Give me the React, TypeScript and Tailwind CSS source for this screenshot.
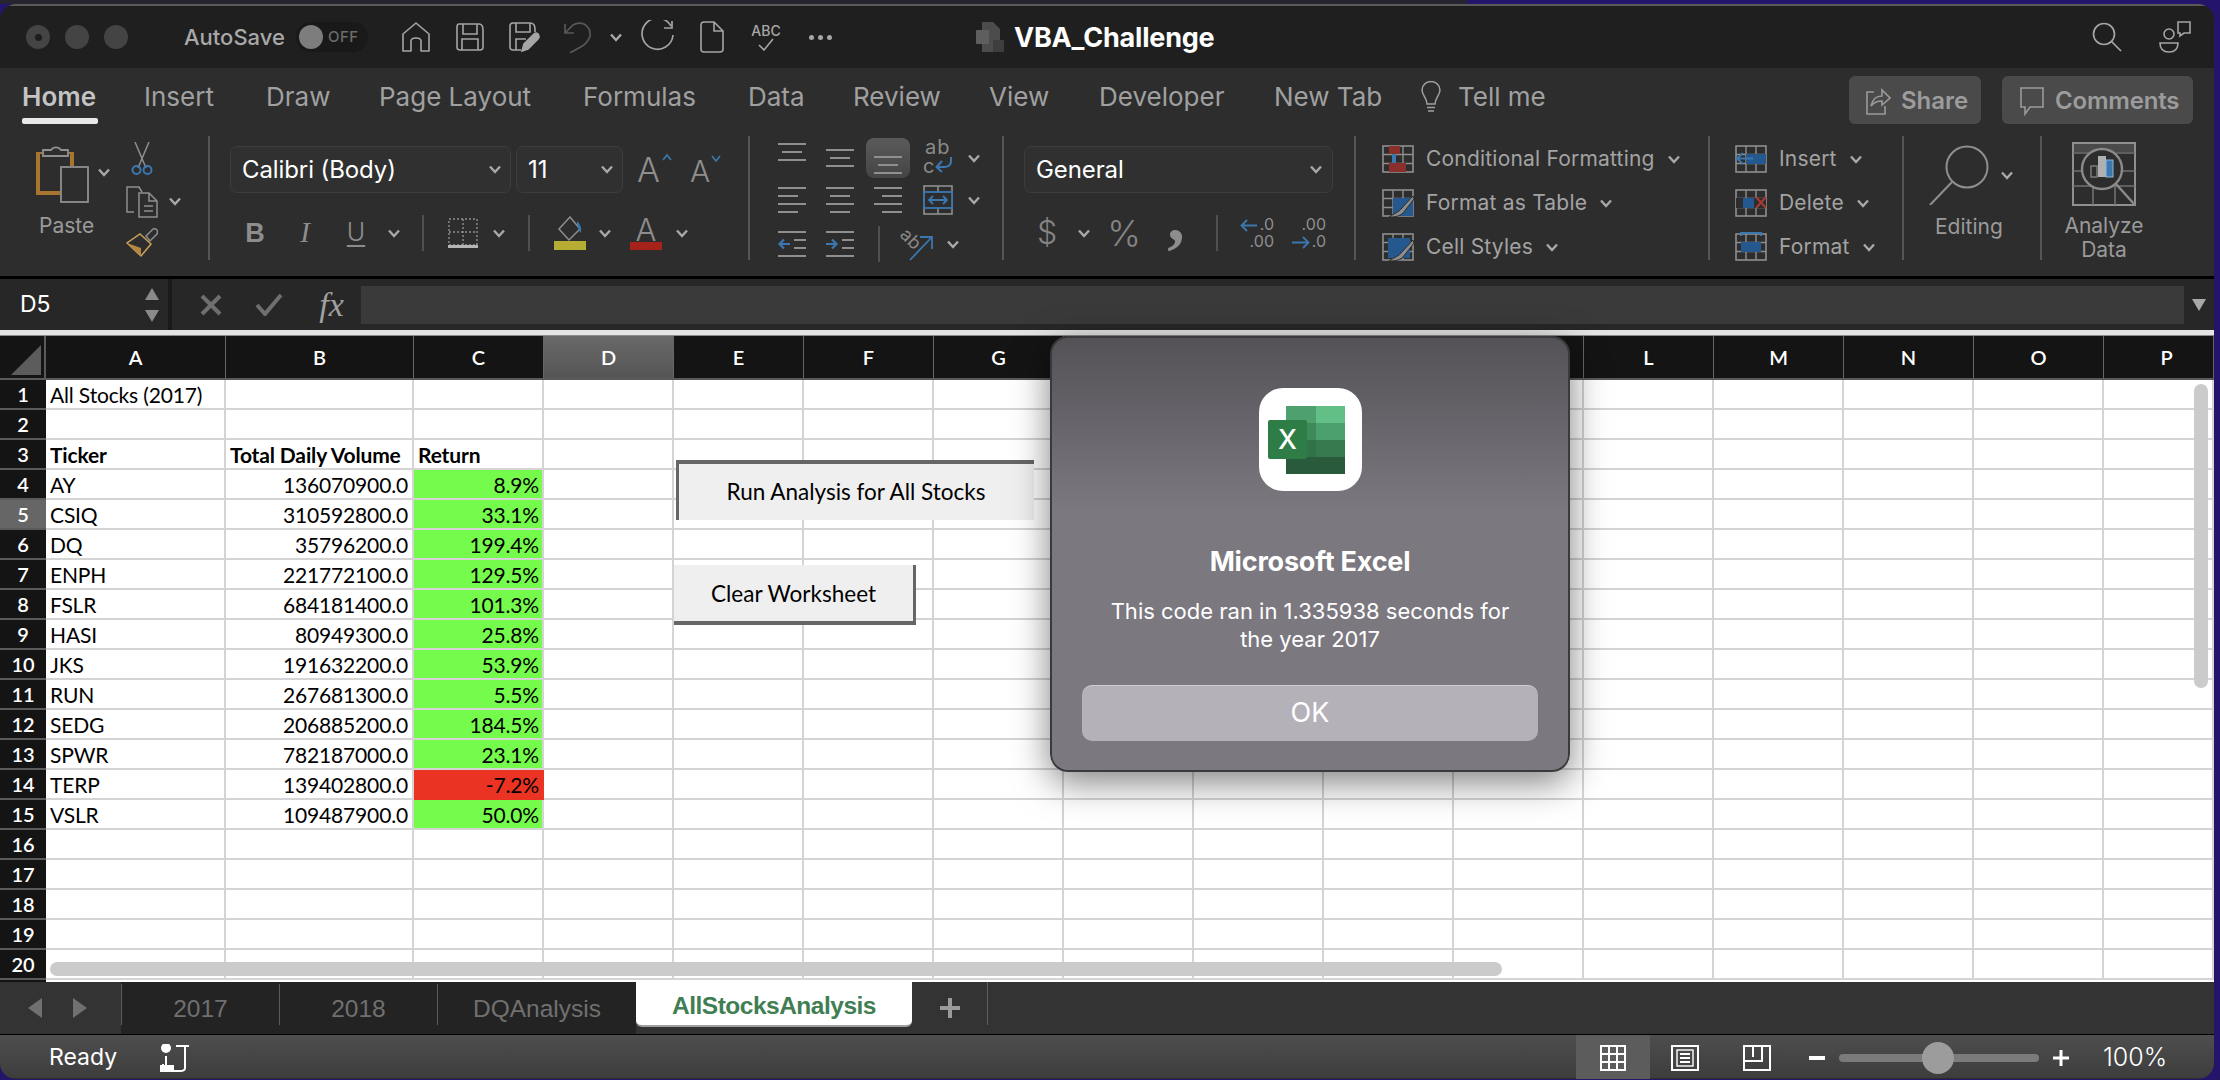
import React from 'react';

const UI = "font-['Inter','Liberation_Sans',sans-serif]";
const CELL = "font-['Lato','Open_Sans',sans-serif]";
const ROW_GRID = 'grid grid-cols-[46px_180px_188px_130px_130px_130px_130px_130px_130px_130px_130px_130px_130px_130px_130px_130px_110px]';
const COLS = ['A', 'B', 'C', 'D', 'E', 'F', 'G', 'H', 'I', 'J', 'K', 'L', 'M', 'N', 'O', 'P'];

const STOCKS: [string, string, string, boolean?][] = [
  ['AY', '136070900.0', '8.9%'],
  ['CSIQ', '310592800.0', '33.1%'],
  ['DQ', '35796200.0', '199.4%'],
  ['ENPH', '221772100.0', '129.5%'],
  ['FSLR', '684181400.0', '101.3%'],
  ['HASI', '80949300.0', '25.8%'],
  ['JKS', '191632200.0', '53.9%'],
  ['RUN', '267681300.0', '5.5%'],
  ['SEDG', '206885200.0', '184.5%'],
  ['SPWR', '782187000.0', '23.1%'],
  ['TERP', '139402800.0', '-7.2%', true],
  ['VSLR', '109487900.0', '50.0%'],
];

const GRAY = '#8f8f8f';
const BLUE = '#3b78b0';

function Chevron({ color = '#a8a8a8' }: { color?: string }) {
  return (
    <svg width="12" height="9" viewBox="0 0 12 9" fill="none">
      <path d="M1 1.5 L6 7 L11 1.5" stroke={color} strokeWidth="2.4" />
    </svg>
  );
}

function Slot({ w, children }: { w: string; children?: React.ReactNode }) {
  return <div className={`${w} flex items-center justify-center shrink-0`}>{children}</div>;
}

function Sep() {
  return <div className="w-[2px] h-[124px] mt-0 bg-[#555555] shrink-0" />;
}

function MiniSep({ h = 'h-[36px]' }: { h?: string }) {
  return <div className={`w-[2px] ${h} bg-[#505050]`} />;
}

function Lines({ rows, h = 40 }: { rows: [number, number, number][]; h?: number }) {
  return (
    <svg width="28" height={h} viewBox={`0 0 28 ${h}`}>
      {rows.map(([x, w, y], i) => (
        <rect key={i} x={x} y={y} width={w} height="2" fill={GRAY} />
      ))}
    </svg>
  );
}

function Indent({ dir }: { dir: 'l' | 'r' }) {
  return (
    <svg width="28" height="28" viewBox="0 0 28 28" fill="none">
      <rect x="0" y="1" width="28" height="2" fill={GRAY} />
      <rect x="16" y="9" width="12" height="2" fill={GRAY} />
      <rect x="16" y="17" width="12" height="2" fill={GRAY} />
      <rect x="0" y="25" width="28" height="2" fill={GRAY} />
      {dir === 'l' ? (
        <path d="M12 14 H2 M6 9.5 L1.5 14 L6 18.5" stroke={BLUE} strokeWidth="2.2" />
      ) : (
        <path d="M0 14 H10 M6 9.5 L10.5 14 L6 18.5" stroke={BLUE} strokeWidth="2.2" />
      )}
    </svg>
  );
}

function TableIcon({ children }: { children?: React.ReactNode }) {
  return (
    <svg width="32" height="30" viewBox="0 0 32 30" fill="none">
      <rect x="1" y="2" width="30" height="26" stroke={GRAY} strokeWidth="1.6" />
      <path d="M11 2 V28 M21 2 V28 M1 10.5 H31 M1 19.5 H31" stroke={GRAY} strokeWidth="1.4" />
      {children}
    </svg>
  );
}

const Brush = () => (
  <path d="M31 8 L19 21 C17 24 13 25 7 29 C11 29 17 29 21 25 L32 11 Z" fill="#8d8d8d" stroke="#2d2d2d" strokeWidth="1" />
);

function StyleRow({ icon, label }: { icon: React.ReactNode; label: string }) {
  return (
    <div className="h-[44px] flex items-center">
      <div className="w-[32px] h-[30px] shrink-0">{icon}</div>
      <span className="ml-[12px] text-[21px] text-[#a3a3a3] tracking-[0.2px] whitespace-nowrap">{label}</span>
      <div className="ml-[13px]">
        <Chevron />
      </div>
    </div>
  );
}

function TitleBar() {
  return (
    <div className="h-[64px] bg-[#1f1f1f] border-t-2 border-[#5a5a5a] flex items-center relative shrink-0">
      <div className="ml-[26px] flex gap-[15px]">
        <div className="w-[24px] h-[24px] rounded-full bg-[#444444] flex items-center justify-center">
          <div className="w-[7px] h-[7px] rounded-full bg-[#1e1e1e]" />
        </div>
        <div className="w-[24px] h-[24px] rounded-full bg-[#444444]" />
        <div className="w-[24px] h-[24px] rounded-full bg-[#444444]" />
      </div>
      <span className="ml-[56px] w-[112px] text-[22px] text-[#a8a8a8] font-medium">AutoSave</span>
      <div className="w-[72px] h-[30px] rounded-full bg-[#191919] flex items-center pl-[3px]">
        <div className="w-[24px] h-[24px] rounded-full bg-[#7d7d7d]" />
        <span className="ml-[5px] text-[15px] font-medium tracking-[0.5px] text-[#6c6c6c]">OFF</span>
      </div>
      <div className="ml-[21px] w-[54px] flex justify-center">
        <svg width="30" height="32" viewBox="0 0 30 32" fill="none" stroke="#a5a5a5" strokeWidth="1.6" strokeLinejoin="round">
          <path d="M2 30 V13 L15 2 L28 13 V30 H20 V20 Q20 17 15 17 Q10 17 10 20 V30 Z" />
        </svg>
      </div>
      <div className="w-[54px] flex justify-center">
        <svg width="30" height="30" viewBox="0 0 30 30" fill="none" stroke="#a5a5a5" strokeWidth="1.6">
          <path d="M4 2 H24 Q28 2 28 8 V25 Q28 28 25 28 H5 Q2 28 2 25 V5 Q2 2 4 2 Z" />
          <path d="M8 2 V12 H22 V2 M7 28 V17 H23 V28" />
        </svg>
      </div>
      <div className="w-[54px] flex justify-center">
        <svg width="32" height="32" viewBox="0 0 32 32" fill="none" stroke="#a5a5a5" strokeWidth="1.6">
          <path d="M13 29 H5 Q2 29 2 26 V5 Q2 2 5 2 H22 Q27 2 27 8 V11" />
          <path d="M8 2 V11 H22 V2 M8 29 V18 H18" />
          <path d="M14 30 L16 23 L26 13 Q28 11 30 13 Q32 16 30 18 L20 28 Z" fill="#a5a5a5" />
        </svg>
      </div>
      <div className="w-[54px] flex justify-center">
        <svg width="28" height="32" viewBox="0 0 28 32" fill="none" stroke="#585858" strokeWidth="1.7">
          <path d="M1 3 V12 H10 M1 12 L9 4 Q14 1 20 3 Q27 7 26 15 Q25 19 20 24 L6 32" />
        </svg>
      </div>
      <div className="w-[22px] flex justify-center">
        <Chevron />
      </div>
      <div className="w-[62px] flex justify-center">
        <svg width="34" height="34" viewBox="0 0 34 34" fill="none" stroke="#a5a5a5" strokeWidth="1.7">
          <path d="M30 6 A15.5 15.5 0 1 0 32 15" />
          <path d="M31 1 V8 H23" />
        </svg>
      </div>
      <div className="w-[46px] flex justify-center">
        <svg width="24" height="32" viewBox="0 0 24 32" fill="none" stroke="#a5a5a5" strokeWidth="1.6">
          <path d="M4 1 H14 L23 10 V28 Q23 31 20 31 H4 Q1 31 1 28 V4 Q1 1 4 1 Z M14 1 V10 H23" />
        </svg>
      </div>
      <div className="w-[62px] flex flex-col items-center">
        <span className="text-[14px] leading-[15px] font-medium text-[#a8a8a8]">ABC</span>
        <svg width="16" height="13" viewBox="0 0 16 13" fill="none" stroke="#a5a5a5" strokeWidth="1.6">
          <path d="M1 7 L6 12 L15 1" />
        </svg>
      </div>
      <div className="w-[46px] flex justify-center gap-[4px]">
        <div className="w-[5px] h-[5px] rounded-full bg-[#a5a5a5]" />
        <div className="w-[5px] h-[5px] rounded-full bg-[#a5a5a5]" />
        <div className="w-[5px] h-[5px] rounded-full bg-[#a5a5a5]" />
      </div>
      <div className="ml-[133px] w-[38px]">
        <svg width="28" height="32" viewBox="0 0 28 32" fill="#4c4c4c">
          <path d="M6 1 H17 L24 8 V31 H6 Z" />
          <rect x="0" y="9" width="13" height="14" rx="1" fill="#5e5e5e" />
          <rect x="17" y="19" width="11" height="12" fill="#3e3e3e" />
        </svg>
      </div>
      <span className="text-[27px] leading-none font-bold text-white tracking-[-0.2px]">VBA_Challenge</span>
      <div className="ml-auto mr-[22px] flex items-center gap-[36px]">
        <svg width="30" height="30" viewBox="0 0 30 30" fill="none" stroke="#a5a5a5" strokeWidth="1.7">
          <circle cx="12" cy="12" r="10.5" />
          <path d="M19.5 19.5 L29 29" />
        </svg>
        <svg width="34" height="32" viewBox="0 0 34 32" fill="none" stroke="#a5a5a5" strokeWidth="1.6">
          <circle cx="11" cy="13" r="5" />
          <path d="M2 22 H20 Q20 31 11 31 Q2 31 2 22 Z" />
          <path d="M20 1 H32 V12 H26 L22 15 V12 H20 Z" />
        </svg>
      </div>
    </div>
  );
}

function RibbonTabs() {
  const tabs: [string, string][] = [
    ['Insert', 'w-[122px]'],
    ['Draw', 'w-[113px]'],
    ['Page Layout', 'w-[204px]'],
    ['Formulas', 'w-[165px]'],
    ['Data', 'w-[105px]'],
    ['Review', 'w-[136px]'],
    ['View', 'w-[110px]'],
    ['Developer', 'w-[175px]'],
    ['New Tab', 'w-[146px]'],
  ];
  return (
    <div className="h-[68px] flex items-start pl-[22px]">
      <div className="w-[122px] h-[56px] flex flex-col">
        <span className="mt-[14px] text-[26px] leading-[30px] font-semibold text-[#c4c4c4]">Home</span>
        <div className="mt-[6px] w-[76px] h-[6px] rounded-[2px] bg-[#e8e8e8]" />
      </div>
      {tabs.map(([t, w]) => (
        <span key={t} className={`${w} mt-[14px] text-[26px] leading-[30px] text-[#a0a0a0]`}>
          {t}
        </span>
      ))}
      <div className="w-[38px] mt-[13px]">
        <svg width="22" height="32" viewBox="0 0 22 32" fill="none" stroke="#a0a0a0" strokeWidth="1.5">
          <path d="M7 23 C7 17 2 14 2 9 A9 8.5 0 0 1 20 9 C20 14 15 17 15 23 Z M7 26.5 H15 M8 30 H14" />
        </svg>
      </div>
      <span className="mt-[14px] text-[26px] leading-[30px] text-[#a0a0a0]">Tell me</span>
      <div className="ml-auto mr-[21px] mt-[8px] flex gap-[21px]">
        <div className="w-[132px] h-[48px] rounded-[6px] bg-[#4a4a4a] flex items-center pl-[16px] pt-[2px] gap-[10px]">
          <svg width="26" height="30" viewBox="0 0 26 30" fill="none" stroke="#9a9a9a" strokeWidth="1.6">
            <path d="M9 6 H2 V28 H20 V20 M6 20 C8 11 13 10 17 10 V4 L25 12 L17 19 V15 C12 15 9 16 6 20 Z" />
          </svg>
          <span className="text-[24px] font-semibold text-[#9c9c9c]">Share</span>
        </div>
        <div className="w-[191px] h-[48px] rounded-[6px] bg-[#4a4a4a] flex items-center pl-[17px] pt-[2px] gap-[10px]">
          <svg width="26" height="30" viewBox="0 0 26 30" fill="none" stroke="#9a9a9a" strokeWidth="1.6">
            <path d="M2 2 H24 V21 H11 L6 28 V21 H2 Z" />
          </svg>
          <span className="text-[24px] font-semibold text-[#9c9c9c] tracking-[-0.2px]">Comments</span>
        </div>
      </div>
    </div>
  );
}

function ClipboardGroup() {
  return (
    <div className="w-[208px] shrink-0 flex pl-[34px] pt-[6px]">
      <div className="w-[55px] flex flex-col items-start">
        <svg width="56" height="62" viewBox="0 0 56 62" fill="none">
          <path d="M2 10 H40 V24 H26 V53 H2 Z" fill="#a8752f" />
          <rect x="6" y="12" width="30" height="37" fill="#2d2d2d" />
          <path d="M9 14 V8 H17 A6 6 0 0 1 27 8 H34 V14 Z" fill="#2d2d2d" stroke={GRAY} strokeWidth="1.8" />
          <rect x="27" y="25" width="27" height="35" fill="#2d2d2d" stroke={GRAY} strokeWidth="1.8" />
        </svg>
        <span className="mt-[10px] ml-[5px] text-[21px] leading-[24px] text-[#9a9a9a] whitespace-nowrap">Paste</span>
      </div>
      <div className="w-[35px] pt-[26px] pl-[9px]">
        <Chevron />
      </div>
      <div className="w-[36px] flex flex-col items-center">
        <svg width="22" height="34" viewBox="0 0 22 34" fill="none">
          <path d="M4 0 L15 26 M18 0 L7 26" stroke={GRAY} strokeWidth="1.5" />
          <circle cx="5.5" cy="28" r="4" stroke={BLUE} strokeWidth="2" />
          <circle cx="16.5" cy="28" r="4" stroke={BLUE} strokeWidth="2" />
        </svg>
        <svg className="mt-[10px]" width="32" height="32" viewBox="0 0 32 32" fill="none" stroke={GRAY} strokeWidth="1.5">
          <path d="M8 26 H1 V1 H13 L16 6" />
          <path d="M13 7 H23 L31 15 V31 H13 Z M23 7 V15 H31 M18 20 H27 M18 25 H27" />
        </svg>
        <svg className="mt-[10px]" width="32" height="30" viewBox="0 0 32 30" fill="none">
          <path d="M20 8 L27 1 Q29 0 31 2 Q32 4 31 6 L24 13 Z" stroke={GRAY} strokeWidth="1.5" />
          <path d="M14 6 L25 16 L15 28 L1 15 Z" stroke="#c9a15a" strokeWidth="1.5" />
          <path d="M1 15 L15 20 L15 28 Z" fill="#b5863f" />
        </svg>
      </div>
      <div className="pt-[55px] pl-[9px]">
        <Chevron />
      </div>
    </div>
  );
}

function FontGroup() {
  return (
    <div className="w-[538px] shrink-0 pl-[20px] pt-[10px]">
      <div className="flex h-[47px]">
        <div className="w-[281px] h-[47px] rounded-[7px] bg-[#303030] border border-[#3d3d3d] flex items-center pl-[11px] pr-[9px] justify-between">
          <span className="text-[24px] text-white tracking-[-0.1px]">Calibri (Body)</span>
          <Chevron />
        </div>
        <div className="ml-[5px] w-[107px] h-[47px] rounded-[7px] bg-[#303030] border border-[#3d3d3d] flex items-center pl-[11px] pr-[9px] justify-between">
          <span className="text-[24px] text-white">11</span>
          <Chevron />
        </div>
        <div className="ml-[14px] w-[32px] h-[47px] flex items-center relative">
          <span className="text-[34px] leading-[40px] font-light text-[#8f8f8f]">A</span>
          <svg className="absolute top-[8px] right-[-3px]" width="10" height="7" viewBox="0 0 10 7" fill="none" stroke={BLUE} strokeWidth="1.6">
            <path d="M1 6 L5 1 L9 6" />
          </svg>
        </div>
        <div className="ml-[21px] w-[28px] h-[47px] flex items-center relative">
          <span className="text-[30px] leading-[36px] font-light text-[#8f8f8f] mt-[2px]">A</span>
          <svg className="absolute top-[9px] right-[-3px]" width="10" height="7" viewBox="0 0 10 7" fill="none" stroke={BLUE} strokeWidth="1.6">
            <path d="M1 1 L5 6 L9 1" />
          </svg>
        </div>
      </div>
      <div className="flex h-[44px] mt-[18px]">
        <Slot w="w-[50px]">
          <span className="font-['Liberation_Sans',sans-serif] text-[27px] font-bold text-[#8d8d8d]">B</span>
        </Slot>
        <Slot w="w-[50px]">
          <span className="font-['Liberation_Serif',serif] text-[29px] italic text-[#8d8d8d]">I</span>
        </Slot>
        <Slot w="w-[52px]">
          <span className="text-[25px] font-light text-[#8d8d8d] underline underline-offset-[4px]">U</span>
        </Slot>
        <Slot w="w-[24px]">
          <Chevron />
        </Slot>
        <Slot w="w-[34px]">
          <MiniSep />
        </Slot>
        <Slot w="w-[46px]">
          <svg width="30" height="30" viewBox="0 0 30 30" fill="none">
            <rect x="1" y="1" width="28" height="26" stroke={GRAY} strokeWidth="1.4" strokeDasharray="2 2" />
            <path d="M15 1 V27 M1 14 H29" stroke={GRAY} strokeWidth="1.4" strokeDasharray="2 2" />
            <rect x="0" y="27" width="30" height="3" fill="#b5b5b5" />
          </svg>
        </Slot>
        <Slot w="w-[26px]">
          <Chevron />
        </Slot>
        <Slot w="w-[34px]">
          <MiniSep />
        </Slot>
        <Slot w="w-[48px]">
          <svg width="32" height="34" viewBox="0 0 32 34" fill="none">
            <path d="M16 1 L5 13 L15 24 L26 13 Z" stroke={GRAY} strokeWidth="1.5" />
            <path d="M23 5 Q28 9 27 17 Q23 13 23 5 Z" fill={BLUE} />
            <rect x="0" y="25" width="32" height="9" fill="#b8ad33" />
          </svg>
        </Slot>
        <Slot w="w-[22px]">
          <Chevron />
        </Slot>
        <Slot w="w-[60px]">
          <div className="flex flex-col items-center w-[32px]">
            <span className="text-[31px] leading-[25px] font-light text-[#8d8d8d]">A</span>
            <div className="w-[32px] h-[8px] bg-[#a6231c]" />
          </div>
        </Slot>
        <Slot w="w-[12px]">
          <Chevron />
        </Slot>
      </div>
    </div>
  );
}

function AlignGroup() {
  return (
    <div className="w-[252px] shrink-0 pl-[18px] pt-[2px]">
      <div className="flex h-[40px]">
        <Slot w="w-[48px]">
          <Lines rows={[[0, 28, 5], [4, 20, 13], [0, 28, 21]]} />
        </Slot>
        <Slot w="w-[48px]">
          <Lines rows={[[0, 28, 11], [4, 20, 19], [0, 28, 27]]} />
        </Slot>
        <Slot w="w-[48px]">
          <div className="w-[44px] h-[40px] rounded-[8px] bg-gradient-to-b from-[#5a5a5a] to-[#454545] flex justify-center">
            <Lines rows={[[0, 28, 18], [4, 20, 26], [0, 28, 34]]} />
          </div>
        </Slot>
        <Slot w="w-[52px]">
          <div className="relative w-[30px] h-[36px]">
            <span className="absolute left-[2px] top-[-4px] text-[20px] leading-[22px] text-[#8a8a8a] tracking-[1px]">ab</span>
            <span className="absolute left-0 top-[15px] text-[20px] leading-[22px] text-[#8a8a8a]">c</span>
            <svg className="absolute left-[12px] top-[16px]" width="18" height="18" viewBox="0 0 18 18" fill="none" stroke={BLUE} strokeWidth="2">
              <path d="M16 1 V5 Q16 11 9 11 H2 M7 5 L1.5 11 L7 16" />
            </svg>
          </div>
        </Slot>
        <Slot w="w-[20px]">
          <Chevron />
        </Slot>
      </div>
      <div className="flex h-[44px]">
        <Slot w="w-[48px]">
          <Lines h={28} rows={[[0, 28, 1], [0, 20, 9], [0, 28, 17], [0, 20, 25]]} />
        </Slot>
        <Slot w="w-[48px]">
          <Lines h={28} rows={[[0, 28, 1], [4, 20, 9], [0, 28, 17], [4, 20, 25]]} />
        </Slot>
        <Slot w="w-[48px]">
          <Lines h={28} rows={[[0, 28, 1], [8, 20, 9], [0, 28, 17], [8, 20, 25]]} />
        </Slot>
        <Slot w="w-[52px]">
          <svg width="30" height="30" viewBox="0 0 30 30" fill="none">
            <rect x="1" y="1" width="28" height="28" stroke={GRAY} strokeWidth="1.6" />
            <path d="M15 1 V7 M15 23 V29" stroke={GRAY} strokeWidth="1.6" />
            <rect x="1" y="7" width="28" height="16" fill="#2d2d2d" stroke={BLUE} strokeWidth="1.8" />
            <path d="M6 15 H24 M10 11 L6 15 L10 19 M20 11 L24 15 L20 19" stroke={BLUE} strokeWidth="1.8" />
          </svg>
        </Slot>
        <Slot w="w-[20px]">
          <Chevron />
        </Slot>
      </div>
      <div className="flex h-[44px]">
        <Slot w="w-[48px]">
          <Indent dir="l" />
        </Slot>
        <Slot w="w-[48px]">
          <Indent dir="r" />
        </Slot>
        <Slot w="w-[30px]">
          <MiniSep />
        </Slot>
        <Slot w="w-[44px]">
          <svg width="34" height="36" viewBox="0 0 34 36" fill="none">
            <text x="0" y="18" transform="rotate(45 10 14)" fontSize="18" fill="#8a8a8a" fontFamily="Inter">ab</text>
            <path d="M11 34 L32 12 M21 11 H33 V23" stroke={BLUE} strokeWidth="1.8" />
          </svg>
        </Slot>
        <Slot w="w-[30px]">
          <Chevron />
        </Slot>
      </div>
    </div>
  );
}

function DecimalIcon({ top, bottom, up }: { top: string; bottom: string; up?: boolean }) {
  return (
    <div className="w-[34px] h-[34px] relative text-[16px] leading-[17px] text-[#8f8f8f] text-right">
      <div>{top}</div>
      <div>{bottom}</div>
      <svg className={`absolute left-0 ${up ? 'top-[3px]' : 'top-[20px]'}`} width="18" height="13" viewBox="0 0 18 13" fill="none" stroke={BLUE} strokeWidth="1.8">
        {up ? <path d="M17 6.5 H2 M7 1 L1.5 6.5 L7 12" /> : <path d="M0 6.5 H16 M11 1 L16.5 6.5 L11 12" />}
      </svg>
    </div>
  );
}

function NumberGroup() {
  return (
    <div className="w-[350px] shrink-0 pl-[20px] pt-[10px]">
      <div className="w-[309px] h-[47px] rounded-[7px] bg-[#303030] border border-[#3d3d3d] flex items-center pl-[11px] pr-[10px] justify-between">
        <span className="text-[24px] text-white tracking-[-0.1px]">General</span>
        <Chevron />
      </div>
      <div className="flex h-[44px] mt-[18px]">
        <Slot w="w-[46px]">
          <span className="text-[32px] font-light text-[#858585]">$</span>
        </Slot>
        <Slot w="w-[28px]">
          <Chevron />
        </Slot>
        <Slot w="w-[52px]">
          <span className="text-[36px] font-light text-[#858585]">%</span>
        </Slot>
        <Slot w="w-[52px]">
          <span className="mb-[32px] font-['Liberation_Serif',serif] text-[70px] leading-[20px] font-bold text-[#8d8d8d]">,</span>
        </Slot>
        <Slot w="w-[30px]">
          <MiniSep />
        </Slot>
        <Slot w="w-[50px]">
          <DecimalIcon top=".0" bottom=".00" up />
        </Slot>
        <Slot w="w-[54px]">
          <DecimalIcon top=".00" bottom=".0" />
        </Slot>
      </div>
    </div>
  );
}

function StylesGroup() {
  return (
    <div className="w-[352px] shrink-0 pl-[26px] pt-[1px]">
      <StyleRow
        label="Conditional Formatting"
        icon={
          <TableIcon>
            <rect x="7" y="2" width="11" height="8" fill="#8b2f2c" />
            <rect x="7" y="19" width="17" height="9" fill="#8b2f2c" />
            <rect x="10" y="10" width="4" height="9" fill={BLUE} />
          </TableIcon>
        }
      />
      <StyleRow
        label="Format as Table"
        icon={
          <TableIcon>
            <rect x="11" y="10" width="20" height="18" fill="#24588f" />
            <Brush />
          </TableIcon>
        }
      />
      <StyleRow
        label="Cell Styles"
        icon={
          <TableIcon>
            <rect x="6" y="6" width="22" height="20" fill="#24588f" />
            <Brush />
          </TableIcon>
        }
      />
    </div>
  );
}

function CellsGroup() {
  return (
    <div className="w-[192px] shrink-0 pl-[25px] pt-[1px]">
      <StyleRow
        label="Insert"
        icon={
          <TableIcon>
            <rect x="11" y="10" width="20" height="10" fill="#24588f" />
            <path d="M18 14.5 H3 M8 9 L2 14.5 L8 20" stroke={BLUE} strokeWidth="2" />
          </TableIcon>
        }
      />
      <StyleRow
        label="Delete"
        icon={
          <TableIcon>
            <rect x="1" y="10" width="30" height="10" fill="#2d2d2d" />
            <rect x="8" y="10" width="11" height="10" fill="#24588f" />
            <path d="M21 9 L31 20 M31 9 L21 20" stroke="#a83a33" strokeWidth="2" />
          </TableIcon>
        }
      />
      <StyleRow
        label="Format"
        icon={
          <TableIcon>
            <rect x="6" y="10" width="20" height="10" fill="#24588f" />
            <path d="M6 1 H26 M6 -2 V4 M26 -2 V4" stroke={BLUE} strokeWidth="2" />
          </TableIcon>
        }
      />
    </div>
  );
}

function EditingGroup() {
  return (
    <div className="w-[136px] shrink-0 pl-[25px] pt-[9px] relative">
      <svg width="60" height="60" viewBox="0 0 60 60" fill="none" stroke={GRAY} strokeWidth="2">
        <circle cx="38" cy="22" r="20.5" />
        <path d="M23 37 L1 60" />
      </svg>
      <div className="absolute left-[97px] top-[35px]">
        <Chevron />
      </div>
      <div className="mt-[10px] ml-[6px] text-[21px] leading-[24px] text-[#9a9a9a]">Editing</div>
    </div>
  );
}

function AnalyzeGroup() {
  return (
    <div className="w-[172px] shrink-0 pl-[30px] pt-[6px]">
      <svg width="64" height="64" viewBox="0 0 64 64" fill="none">
        <rect x="1" y="1" width="62" height="62" stroke={GRAY} strokeWidth="2" />
        <rect x="2" y="2" width="60" height="8" fill="#4a4a4a" />
        <path d="M1 11 H63 M1 29 H63 M1 44 H63 M21 44 V63 M43 44 V63" stroke="#707070" strokeWidth="1.6" />
        <circle cx="30" cy="27" r="20" fill="#2d2d2d" stroke="#8a8a8a" strokeWidth="2.4" />
        <rect x="19" y="24" width="6" height="11" stroke="#777777" strokeWidth="1.6" />
        <rect x="26" y="14" width="8" height="21" fill="#b0b0b0" />
        <rect x="34" y="18" width="7" height="17" fill={BLUE} stroke="#8fb7d9" strokeWidth="1" />
        <path d="M44 42 L63 63" stroke="#8a8a8a" strokeWidth="2.6" />
      </svg>
      <div className="w-[64px] mt-[8px] flex flex-col items-center text-[21px] leading-[24px] text-[#9a9a9a]">
        <span>Analyze</span>
        <span>Data</span>
      </div>
    </div>
  );
}

function Ribbon() {
  return (
    <div className="h-[208px] bg-[#2d2d2d] shrink-0">
      <RibbonTabs />
      <div className="flex h-[140px]">
        <ClipboardGroup />
        <Sep />
        <FontGroup />
        <Sep />
        <AlignGroup />
        <Sep />
        <NumberGroup />
        <Sep />
        <StylesGroup />
        <Sep />
        <CellsGroup />
        <Sep />
        <EditingGroup />
        <Sep />
        <AnalyzeGroup />
      </div>
    </div>
  );
}

function FormulaBar() {
  return (
    <div className="h-[51px] bg-[#272727] flex items-center shrink-0">
      <div className="w-[168px] h-[51px] flex items-center justify-between pl-[20px] pr-[9px]">
        <span className="text-[23px] text-white">D5</span>
        <div className="flex flex-col gap-[10px]">
          <div className="w-0 h-0 border-x-[7px] border-x-transparent border-b-[12px] border-b-[#8a8a8a]" />
          <div className="w-0 h-0 border-x-[7px] border-x-transparent border-t-[12px] border-t-[#8a8a8a]" />
        </div>
      </div>
      <div className="w-[4px] h-[51px] bg-[#1a1a1a]" />
      <Slot w="w-[68px]">
        <svg className="ml-[10px]" width="22" height="22" viewBox="0 0 22 22" fill="none" stroke="#6f6f6f" strokeWidth="4">
          <path d="M2 2 L20 20 M20 2 L2 20" />
        </svg>
      </Slot>
      <Slot w="w-[50px]">
        <svg className="ml-[8px]" width="28" height="22" viewBox="0 0 28 22" fill="none" stroke="#6f6f6f" strokeWidth="4">
          <path d="M2 11 L10 20 L26 1" />
        </svg>
      </Slot>
      <Slot w="w-[67px]">
        <span className="ml-[16px] font-['Liberation_Serif',serif] italic text-[34px] text-[#a0a0a0]">fx</span>
      </Slot>
      <div className="ml-[4px] w-[1823px] h-[38px] bg-[#3a3a3a]" />
      <div className="ml-[8px] w-0 h-0 border-x-[7px] border-x-transparent border-t-[12px] border-t-[#a8a8a8]" />
    </div>
  );
}

function Cell({ className = '', children }: { className?: string; children?: React.ReactNode }) {
  return (
    <div className={`h-[30px] pt-[2px] border-r-2 border-b-2 border-[#d4d4d4] flex items-center text-[21px] text-black tracking-[-0.15px] whitespace-nowrap overflow-hidden ${className}`}>
      {children}
    </div>
  );
}

function SheetRow({ n }: { n: number }) {
  const stock = n >= 4 && n <= 15 ? STOCKS[n - 4] : null;
  const header = n === 3;
  return (
    <div className={ROW_GRID}>
      <div className={`h-[30px] border-b-2 border-[#5a5a5a] flex items-center justify-center text-[20px] font-semibold text-white ${n === 5 ? 'bg-[#666666]' : 'bg-[#141414]'}`}>
        {n}
      </div>
      <Cell className={`pl-[4px] ${header ? 'font-bold' : ''}`}>
        {n === 1 ? 'All Stocks (2017)' : header ? 'Ticker' : stock?.[0]}
      </Cell>
      <Cell className={header ? 'pl-[4px] font-bold' : 'justify-end pr-[4px]'}>
        {header ? 'Total Daily Volume' : stock?.[1]}
      </Cell>
      {stock ? (
        <Cell className={`justify-end pr-[3px] ${stock[3] ? 'bg-[#ea3323] border-[#ea3323]' : 'bg-[#75fb4c] border-[#75fb4c]'}`}>
          {stock[2]}
        </Cell>
      ) : (
        <Cell className="pl-[4px] font-bold">{header ? 'Return' : ''}</Cell>
      )}
      {COLS.slice(3).map(c => (
        <Cell key={c} />
      ))}
    </div>
  );
}

function Sheet() {
  const rows = Array.from({ length: 20 }, (_, i) => i + 1);
  return (
    <div className={`h-[647px] bg-white relative overflow-hidden shrink-0 ${CELL}`}>
      <div className="h-[1px] bg-[#8a8a8a]" />
      <div className={`${ROW_GRID} h-[44px] bg-[#141414] border-b-2 border-[#5a5a5a]`}>
        <div className="border-r-2 border-[#5a5a5a] flex items-end justify-end pr-[3px] pb-[3px]">
          <div className="w-0 h-0 border-l-[30px] border-l-transparent border-b-[30px] border-b-[#5c5c5c]" />
        </div>
        {COLS.map(c => (
          <div
            key={c}
            className={`border-r border-[#666666] flex items-center justify-center text-[20px] font-semibold text-white ${c === 'D' ? 'bg-gradient-to-b from-[#696969] to-[#555555]' : ''} ${c === 'P' ? 'pl-[16px]' : ''}`}
          >
            {c}
          </div>
        ))}
      </div>
      {rows.map(n => (
        <SheetRow key={n} n={n} />
      ))}
      <div className="w-[46px] h-[2px] bg-[#141414]" />

      {/* floating form buttons and scrollbars */}
      <div className="absolute left-[676px] top-[125px] w-[358px] h-[60px] bg-[#efefef] border-t-4 border-l-[3px] border-[#666666] flex items-center justify-center text-[22.5px] text-black pr-[1px]">
        Run Analysis for All Stocks
      </div>
      <div className="absolute left-[674px] top-[230px] w-[242px] h-[60px] bg-[#efefef] border-b-4 border-r-[3px] border-[#666666] flex items-center justify-center text-[22.5px] text-black pt-[1px]">
        Clear Worksheet
      </div>
      <div className="absolute left-[2194px] top-[49px] w-[14px] h-[304px] rounded-full bg-[#cbcbcb]" />
      <div className="absolute left-[50px] top-[627px] w-[1452px] h-[14px] rounded-full bg-[#cbcbcb]" />
    </div>
  );
}

function SheetTabs() {
  const tabs: [string, string][] = [
    ['2017', 'w-[158px]'],
    ['2018', 'w-[158px]'],
    ['DQAnalysis', 'w-[199px]'],
  ];
  return (
    <div className="h-[52px] bg-[#333333] flex font-['Liberation_Sans',sans-serif] shrink-0">
      <div className="w-[121px] flex items-center pl-[28px] gap-[31px]">
        <div className="w-0 h-0 border-y-[10px] border-y-transparent border-r-[14px] border-r-[#707070]" />
        <div className="w-0 h-0 border-y-[10px] border-y-transparent border-l-[14px] border-l-[#707070]" />
      </div>
      {tabs.map(([t, w]) => (
        <div key={t} className={`${w} bg-[#232323] pt-[2px] flex`}>
          <div className="w-[1px] h-[41px] bg-[#5c5c5c]" />
          <div className="flex-1 h-[50px] flex items-center justify-center text-[24.5px] text-[#707070]">{t}</div>
        </div>
      ))}
      <div className="w-[276px] h-[45px] bg-white rounded-b-[6px] border-b-2 border-[#a0a0a0] pt-[6px] flex items-center justify-center text-[24.5px] font-bold tracking-[-0.5px] text-[#3f7e52]">
        AllStocksAnalysis
      </div>
      <div className="w-[76px] h-[43px] pt-[8px] flex items-center justify-center border-r border-[#5c5c5c]">
        <svg width="20" height="20" viewBox="0 0 20 20" fill="#9a9a9a">
          <path d="M8 0 H12 V8 H20 V12 H12 V20 H8 V12 H0 V8 H8 Z" />
        </svg>
      </div>
    </div>
  );
}

function StatusBar() {
  return (
    <div className={`h-[44px] pt-[2px] bg-gradient-to-b from-[#4e4e4e] to-[#3d3d3d] border-t border-black flex items-center shrink-0 ${UI}`}>
      <span className="ml-[49px] w-[111px] text-[23px] text-white">Ready</span>
      <svg width="30" height="28" viewBox="0 0 30 28" fill="none" stroke="white" strokeWidth="2">
        <circle cx="6" cy="4" r="4" fill="white" />
        <path d="M16 2 H29 V2 M25 2 V24 Q25 27 20 27 H3 V20 M6 12 V22" />
        <rect x="1" y="22" width="12" height="5" fill="white" />
      </svg>
      <div className="ml-[1386px] w-[74px] h-[44px] -mt-[2px] bg-[#5c5c5c] flex items-center justify-center pt-[2px]">
        <svg width="26" height="26" viewBox="0 0 26 26" fill="none" stroke="white" strokeWidth="2">
          <rect x="1" y="1" width="24" height="24" />
          <path d="M9 1 V25 M17 1 V25 M1 9 H25 M1 17 H25" />
        </svg>
      </div>
      <div className="ml-[21px]">
        <svg width="28" height="26" viewBox="0 0 28 26" fill="none" stroke="white" strokeWidth="2">
          <rect x="1" y="1" width="26" height="24" />
          <rect x="6" y="5" width="16" height="16" strokeWidth="1.4" />
          <path d="M9 9 H19 M9 13 H19 M9 17 H19" />
        </svg>
      </div>
      <div className="ml-[44px]">
        <svg width="28" height="26" viewBox="0 0 28 26" fill="none" stroke="white" strokeWidth="2">
          <path d="M1 1 H27 V25 H1 Z M1 16 H19 V1 M10 1 V12" />
        </svg>
      </div>
      <div className="ml-[38px] w-[16px] h-[4px] bg-white" />
      <div className="ml-[14px] w-[200px] h-[8px] rounded-full bg-[#7b7b7b] relative">
        <div className="absolute left-[83px] top-[-12px] w-[32px] h-[32px] rounded-full bg-[#9c9c9c]" />
      </div>
      <svg className="ml-[14px]" width="16" height="16" viewBox="0 0 16 16" fill="white">
        <path d="M6.5 0 H9.5 V6.5 H16 V9.5 H9.5 V16 H6.5 V9.5 H0 V6.5 H6.5 Z" />
      </svg>
      <span className="ml-[34px] text-[25px] font-light text-white">100%</span>
    </div>
  );
}

function ExcelLogo() {
  return (
    <div className="w-[103px] h-[103px] rounded-[24px] bg-white">
      <svg width="103" height="103" viewBox="0 0 103 103">
        <rect x="27" y="18" width="30" height="17" fill="#4fa06f" />
        <rect x="57" y="18" width="29" height="17" fill="#62c087" />
        <rect x="27" y="35" width="30" height="17" fill="#3f8a5b" />
        <rect x="57" y="35" width="29" height="17" fill="#4ba06e" />
        <rect x="27" y="52" width="30" height="17" fill="#317348" />
        <rect x="57" y="52" width="29" height="17" fill="#37794f" />
        <rect x="27" y="69" width="59" height="17" fill="#2a5a3c" />
        <rect x="9" y="32" width="39" height="39" rx="2" fill="#2f7d46" />
        <text x="28.5" y="61" textAnchor="middle" fontSize="27" fontFamily="Inter" fontWeight="500" fill="white">X</text>
      </svg>
    </div>
  );
}

function AlertDialog() {
  return (
    <div className={`absolute left-[1050px] top-[336px] w-[520px] h-[436px] rounded-[18px] border-2 border-[#3a3a3c] bg-gradient-to-b from-[#545157] to-[#7b7880] from-0% to-40% shadow-[0_10px_36px_rgba(0,0,0,0.5)] flex flex-col items-center ${UI}`}>
      <div className="mt-[50px]">
        <ExcelLogo />
      </div>
      <div className="mt-[55px] text-[27px] leading-[32px] font-bold text-white tracking-[-0.2px]">Microsoft Excel</div>
      <div className="mt-[19px] w-[430px] text-center text-[22px] leading-[28px] text-white">
        This code ran in 1.335938 seconds for the year 2017
      </div>
      <div className="mt-[32px] w-[456px] h-[56px] rounded-[10px] bg-[#b4b1b8] border-t border-[#cfcdd2] flex items-center justify-center text-[27px] text-white">
        OK
      </div>
    </div>
  );
}

export default function App() {
  return (
    <div className="relative w-[2220px] h-[1080px] overflow-hidden bg-[#24156b]">
      <div className="h-[4px] w-[1467px] bg-[#26242e]" />
      <div className={`w-[2214px] h-[1075px] rounded-[16px] overflow-hidden bg-[#2d2d2d] flex flex-col ${UI}`}>
        <TitleBar />
        <Ribbon />
        <div className="h-[3px] bg-black shrink-0" />
        <FormulaBar />
        <div className="h-[5px] bg-[#e4e4e4] shrink-0" />
        <Sheet />
        <SheetTabs />
        <StatusBar />
      </div>
      <AlertDialog />
    </div>
  );
}
